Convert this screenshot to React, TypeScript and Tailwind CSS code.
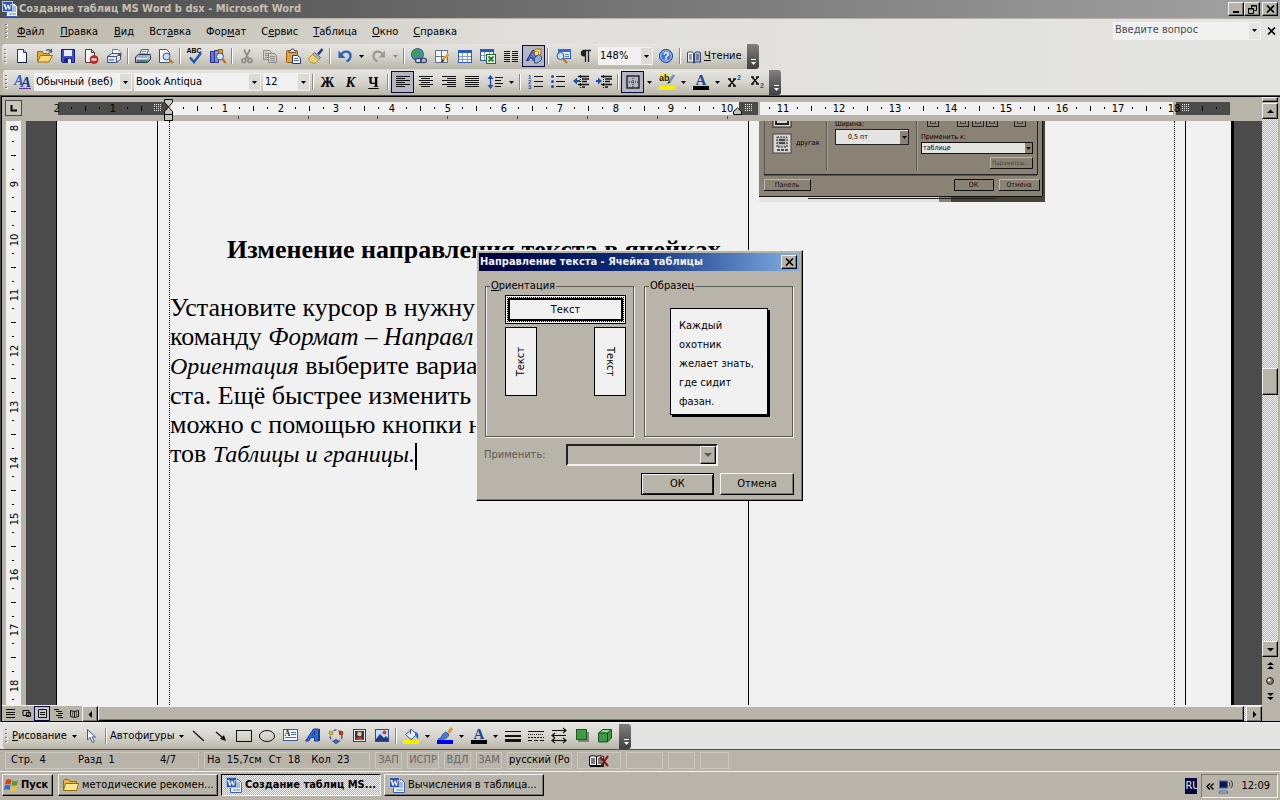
import type { ReactNode } from "react";

const Ico = ({ children }: { children: ReactNode }) => (
  <svg width="16" height="16" viewBox="0 0 16 16" fill="none" className="shrink-0 overflow-visible" aria-hidden="true">
    {children}
  </svg>
);

const serif = "Liberation Serif, serif";
const sans = "Liberation Sans, sans-serif";

/* ---------- standard toolbar icons ---------- */

const WordIcon = () => (
  <Ico>
    <path d="M4.5 2.5h8l3 3v10h-11z" fill="#f1f1f1" stroke="#3a5fb0" />
    <path d="M11 6h3M11 8h3M11 10h3M7 13h7" stroke="#5d83cf" />
    <rect x=".5" y=".5" width="10" height="10" fill="#2c55b0" stroke="#a9c0ee" />
    <text x="5.5" y="9" fontSize="9" fontWeight="bold" textAnchor="middle" fill="#fff" fontFamily={serif}>W</text>
  </Ico>
);

const NewIcon = () => (
  <Ico>
    <path d="M3.5 1.5h6l3 3v10h-9z" fill="#f7f9ff" stroke="#28386b" />
    <path d="M9.5 1.5v3h3" fill="#b8c8ea" stroke="#28386b" />
    <path d="M12.5 5v10M4 14.5h9" stroke="#0f1c48" />
  </Ico>
);

const OpenIcon = () => (
  <Ico>
    <path d="M.5 13.5v-10h5l1 2h6v3" fill="#e0ab35" stroke="#a36b10" />
    <path d="M.5 14l3-6.5h12l-3.5 6.5z" fill="#ffd873" stroke="#a36b10" />
    <path d="M9 2.5c2-1.5 4-1 5 1M14.5 1v3h-3" stroke="#35507f" strokeWidth="1.2" />
  </Ico>
);

const SaveIcon = () => (
  <Ico>
    <path d="M1.5 1.5h13v13h-12l-1-1z" fill="#3c50c8" stroke="#141f7a" />
    <rect x="4" y="2" width="8" height="6" fill="#e9edfb" />
    <rect x="4" y="10" width="8" height="5" fill="#1a2688" />
    <rect x="8" y="11" width="3" height="4" fill="#dfe3f4" />
  </Ico>
);

const PermissionIcon = () => (
  <Ico>
    <path d="M2.5 1.5h6l3 3v10h-9z" fill="#f7f7fb" stroke="#4c3b3b" />
    <path d="M8.5 1.5v3h3" stroke="#4c3b3b" />
    <circle cx="11" cy="11.500" r="4" fill="#d8281c" stroke="#8e120b" strokeWidth=".7" />
    <rect x="8.500" y="10.500" width="5" height="2" fill="#fff" />
  </Ico>
);

const MailIcon = () => (
  <Ico>
    <path d="M6.5 6v-4.5h5.5l3 3v4" fill="#f4f6fb" stroke="#6379a8" />
    <path d="M1.5 8.5l4-3h9v6l-4 3h-9z" fill="#dfe6f2" stroke="#3f5276" />
    <path d="M1.5 8.5h9v6M10.5 8.5l4-3M3 12h5" stroke="#3f5276" />
    <rect x="12" y="6" width="2" height="2" fill="#c92c20" />
  </Ico>
);

const PrintIcon = () => (
  <Ico>
    <path d="M4.5 7l2-5.5h7l-2 5.5" fill="#eef3fc" stroke="#44597d" />
    <path d="M7 3.5h4M6.5 5.5h4" stroke="#7c93c0" />
    <path d="M.5 9l3-2.5h12v5l-3 3h-12z" fill="#9fb0c4" stroke="#26374c" />
    <path d="M1 10.5h11l3-3" stroke="#e9eff5" />
    <path d="M2 13h8" stroke="#26374c" />
    <rect x="10" y="12" width="3" height="2" fill="#25b22a" />
  </Ico>
);

const PreviewIcon = () => (
  <Ico>
    <path d="M1.5 1.5h7l3 3v10h-10z" fill="#f7f7fb" stroke="#41506f" />
    <circle cx="8.5" cy="8.5" r="3.5" fill="#bfe0f7" stroke="#3c587e" />
    <path d="M11 11l4 4" stroke="#c0721b" strokeWidth="2.2" />
  </Ico>
);

const SpellIcon = () => (
  <Ico>
    <text x="7" y="5" fontSize="7" fontWeight="bold" textAnchor="middle" fill="#000" fontFamily={sans}>ABC</text>
    <path d="M3 9.5l4 4.5 7-9" stroke="#1f56b8" strokeWidth="2.4" />
  </Ico>
);

const ResearchIcon = () => (
  <Ico>
    <path d="M.5 3.5h4v11h-4z" fill="#6973d0" stroke="#2a2f86" />
    <path d="M4.5 2.5h4v12h-4z" fill="#8b95e2" stroke="#2a2f86" />
    <path d="M8.5 1.5h4v8h-4z" fill="#e2a63d" stroke="#8a5a12" />
    <circle cx="10" cy="8.5" r="3.5" fill="#cfe7fa" stroke="#3c587e" />
    <path d="M12.5 11l3 4" stroke="#c0721b" strokeWidth="2.2" />
  </Ico>
);

const CutIcon = () => (
  <Ico>
    <path d="M5 1.5l4.5 9M11 1.5l-4.5 9" stroke="#8c8c88" strokeWidth="1.7" />
    <circle cx="5" cy="12.5" r="2" stroke="#8c8c88" strokeWidth="1.7" />
    <circle cx="11" cy="12.5" r="2" stroke="#8c8c88" strokeWidth="1.7" />
  </Ico>
);

const CopyIcon = () => (
  <Ico>
    <path d="M1.5 2.5h6l2 2v7h-8z" fill="#cfcdc7" stroke="#8c8c88" />
    <path d="M3 5.5h5M3 7.5h5M3 9.5h3" stroke="#8c8c88" />
    <path d="M6.5 5.5h6l2 2v7h-8z" fill="#cfcdc7" stroke="#8c8c88" />
    <path d="M8 8.5h5M8 10.5h5M8 12.5h5" stroke="#8c8c88" />
  </Ico>
);

const PasteIcon = () => (
  <Ico>
    <rect x="1.5" y="2.5" width="11" height="12" rx="1" fill="#e8a33b" stroke="#96580f" />
    <path d="M4 4.5v-2h1.5l1-1.5h2l1 1.5h1.5v2z" fill="#d9d9d9" stroke="#555" />
    <path d="M7.5 7.5h5l3 2.5v5.5h-8z" fill="#f4f7fe" stroke="#28386b" />
    <path d="M9 10.5h4M9 12.5h5" stroke="#4b6bb0" />
  </Ico>
);

const BrushIcon = () => (
  <Ico>
    <path d="M14.5 1l-4.5 5.5" stroke="#2e3a7c" strokeWidth="2.6" />
    <path d="M6.5 4.5l6 5-2 2-6-5z" fill="#b9bdc9" stroke="#555b70" />
    <path d="M4.5 6.5l6 5-3.5 4c-3-.5-5-2-6.5-4.5z" fill="#ffe98a" stroke="#a9841c" />
    <path d="M2.5 10.5l4.5 4M4.5 9l4 3.5" stroke="#c49d2a" />
  </Ico>
);

const UndoIcon = () => (
  <Ico>
    <path d="M4 6.5c3.5-4.5 9.5-3.5 9.5 1.5 0 2.5-2 4.5-4 5.5" stroke="#2a62c4" strokeWidth="2.4" />
    <path d="M1.5 2.5v7.5h7z" fill="#2a62c4" />
  </Ico>
);

const RedoIcon = () => (
  <Ico>
    <path d="M12 6.5c-3.5-4.5-9.5-3.5-9.5 1.5 0 2.5 2 4.5 4 5.5" stroke="#9c9b97" strokeWidth="2.2" />
    <path d="M14 2.5v7h-6.5z" fill="#9c9b97" />
  </Ico>
);

const LinkIcon = () => (
  <Ico>
    <circle cx="6.5" cy="6.5" r="6" fill="#3d86d6" stroke="#1b3e75" strokeWidth=".8" />
    <path d="M2 3c2-2 5-2 6 0s-1 3-2 4 1 3-1 4c-3-1-4-5-3-8zM9.5 4l3 1v4l-3-2z" fill="#3ea63b" />
    <rect x="4.5" y="10.5" width="6" height="4" rx="2" fill="#e8ecf4" stroke="#3c4d74" strokeWidth="1.3" />
    <rect x="9.5" y="10.5" width="6" height="4" rx="2" stroke="#3c4d74" strokeWidth="1.3" />
  </Ico>
);

const TableBordersIcon = () => (
  <Ico>
    <path d="M1.5 2.5h12v12h-12z" fill="#f4f7fe" stroke="#5e6f98" />
    <path d="M7.5 2.5v12M1.5 8.5h12" stroke="#5e6f98" />
    <path d="M14.5 6l-6 6.5" stroke="#e3a230" strokeWidth="2.6" />
    <path d="M8.5 11l-1.5 4 3.5-2z" fill="#54320c" />
  </Ico>
);

const TableIcon = () => (
  <Ico>
    <rect x="1.5" y="2.5" width="13" height="12" fill="#f7f9ff" stroke="#2f5bb5" />
    <rect x="1" y="2" width="14" height="3" fill="#2f5bb5" />
    <path d="M5.5 5v9M10.5 5v9M2 8.5h12M2 11.5h12" stroke="#7d9ada" />
  </Ico>
);

const ExcelIcon = () => (
  <Ico>
    <rect x=".5" y="1.5" width="13" height="11" fill="#f7f9ff" stroke="#2f5bb5" />
    <rect x="0" y="1" width="14" height="3" fill="#2f5bb5" />
    <path d="M4.5 4v8M9.5 4v8M1 7.5h12" stroke="#7d9ada" />
    <rect x="6.5" y="6.5" width="9" height="9" fill="#f4fbf4" stroke="#1e6b28" />
    <path d="M8.5 8.5l5 5M13.5 8.5l-5 5" stroke="#1e7d2b" strokeWidth="1.8" />
  </Ico>
);

const ColumnsIcon = () => (
  <Ico>
    <path d="M1 3.5h6M9 3.5h6M1 5.5h6M9 5.5h6M1 7.5h6M9 7.5h6M1 9.5h6M9 9.5h6M1 11.5h6M9 11.5h6M1 13.5h6M9 13.5h6" stroke="#111" />
  </Ico>
);

const DrawingIcon = () => (
  <Ico>
    <path d="M.5 12.5l6-10h2.5l1 10h-3l-.3-2.5h-2.700l-1.3 2.5z" fill="#5a74d6" stroke="#1d2c80" />
    <path d="M8.500 2.5l1.500-1.500h5v5l-1.500 1.500h-5z" fill="#ffdf7a" stroke="#8e6816" />
    <path d="M8.5 3.500h4v4" stroke="#8e6816" strokeWidth=".6" />
    <path d="M8.5 10l4-3.500 3 2v3.500l-4 3h-3z" fill="#8fb0d8" stroke="#37557e" />
  </Ico>
);

const DocMapIcon = () => (
  <Ico>
    <rect x="3.5" y="1.5" width="12" height="9" fill="#e9f0fd" stroke="#2f5bb5" />
    <rect x="3" y="1" width="13" height="3" fill="#2f6bd5" />
    <path d="M10 6.5h4M10 8.5h4" stroke="#5b7cc0" />
    <circle cx="5.5" cy="8" r="3.5" fill="#bfe5f5" stroke="#3c587e" />
    <path d="M8 10.5l4 4.5" stroke="#c0721b" strokeWidth="2.2" />
  </Ico>
);

const PilcrowIcon = () => (
  <Ico>
    <path d="M7.5 2v12M10.5 2v12M5 2.5h8" stroke="#222" strokeWidth="1.3" />
    <path d="M8 2h-2a3 3 0 0 0 0 6.5h2z" fill="#222" />
  </Ico>
);

const HelpIcon = () => (
  <Ico>
    <circle cx="8" cy="8" r="6.5" fill="#3b76e0" stroke="#1a3e94" />
    <circle cx="8" cy="8" r="5.3" stroke="#dfe9fc" strokeWidth=".8" />
    <text x="8" y="12" fontSize="11" fontWeight="bold" textAnchor="middle" fill="#fff" fontFamily={sans}>?</text>
  </Ico>
);

const ReadIcon = () => (
  <Ico>
    <path d="M1.5 3.5c2-1 4.5-1 6 .5v10c-1.5-1.5-4-1.5-6-.5z" fill="#f4f7fe" stroke="#34466b" />
    <path d="M14.5 3.5c-2-1-4.500-1-6 .5v10c1.5-1.5 4-1.5 6-.5z" fill="#a9b8d4" stroke="#34466b" />
    <path d="M3 6h3M3 8h3M3 10h3M10 6h3M10 8h3M10 10h3" stroke="#34466b" />
  </Ico>
);

/* ---------- formatting toolbar icons ---------- */

const StylesIcon = () => (
  <Ico>
    <text x="4" y="11" fontSize="14" fontStyle="italic" fontWeight="bold" textAnchor="middle" fill="#2f5bc4" fontFamily={serif}>A</text>
    <text x="11" y="13" fontSize="15" fontStyle="italic" fontWeight="bold" textAnchor="middle" fill="#1c3594" fontFamily={serif}>A</text>
    <path d="M4 14.5h12" stroke="#6a2fa0" />
  </Ico>
);

const LinesIcon = ({ kind }: { kind: "left" | "center" | "right" | "justify" }) => {
  const start = kind === "left" ? 1 : kind === "right" ? 6 : 3;
  return (
    <Ico>
      {[2.5, 4.5, 6.5, 8.5, 10.5, 12.5].map((y, i) => (
        <path key={y} d={i % 2 && kind !== "justify" ? `M${start} ${y}h9` : `M1 ${y}h14`} stroke="#111" />
      ))}
    </Ico>
  );
};

const SpacingIcon = () => (
  <Ico>
    <path d="M3.5 3v10" stroke="#1f4fae" strokeWidth="1.4" />
    <path d="M.5 5l3-4 3 4zM.5 11l3 4 3-4z" fill="#1f4fae" />
    <path d="M8 3.5h8M8 6.5h6M8 9.5h8M8 12.5h6" stroke="#111" />
  </Ico>
);

const NumberedIcon = () => (
  <Ico>
    <path d="M7 2.5h9M7 7.5h9M7 12.5h9" stroke="#111" />
    {["1", "2", "3"].map((n, i) => (
      <text key={n} x="1" y={5 + i * 5} fontSize="6" fontWeight="bold" fill="#1f4fae" fontFamily={sans}>{n}</text>
    ))}
  </Ico>
);

const BulletsIcon = () => (
  <Ico>
    <path d="M6 2.5h9M6 7.5h9M6 12.5h9" stroke="#111" />
    <circle cx="2.500" cy="2.500" r="1.500" fill="#1f4fae" />
    <circle cx="2.500" cy="7.500" r="1.500" fill="#1f4fae" />
    <circle cx="2.500" cy="12.500" r="1.500" fill="#1f4fae" />
  </Ico>
);

const IndentIcon = ({ out }: { out?: boolean }) => (
  <Ico>
    <path d="M5 2.5h11M9 5h7M9 7.500h5M5 10.5h11M9 13h3" stroke="#111" strokeWidth="1.3" />
    <path d={out ? "M0 7l4-3.5v7z" : "M6 7l-4-3.5v7z"} fill="#1f4fae" />
    <path d={out ? "M3 7h4" : "M0 7h3"} stroke="#1f4fae" strokeWidth="2" />
    <path d="M7.5 1v14" stroke="#111" strokeDasharray="1 1" />
  </Ico>
);

const BorderIcon = () => (
  <Ico>
    <rect x="2" y="2" width="12" height="12" stroke="#111" strokeWidth="1.3" />
    <path d="M8 4v9M4 8h9" stroke="#111" strokeDasharray="1 1" />
  </Ico>
);

const HighlightIcon = () => (
  <Ico>
    <rect x="0" y="0" width="10" height="8" fill="#f6ee3c" />
    <text x="0" y="7" fontSize="9" fontWeight="bold" fill="#111" fontFamily={sans}>ab</text>
    <path d="M15 1l-5 7" stroke="#7d8bb8" strokeWidth="2.8" />
    <path d="M8 10l2-3 1.5 1.5z" fill="#222" />
    <rect x="0" y="12" width="16" height="4" fill="#f4f000" />
  </Ico>
);

const FontColorIcon = () => (
  <Ico>
    <text x="8" y="11" fontSize="15" fontWeight="bold" textAnchor="middle" fill="#20448f" fontFamily={serif}>A</text>
    <rect x="0" y="12" width="16" height="4" fill="#000" />
  </Ico>
);

const ScriptIcon = ({ up }: { up?: boolean }) => (
  <Ico>
    <path d={up ? "M2 5l6 7M8 5l-6 7M1 5h3M6 5h3M1 12h3M6 12h3" : "M2 3l6 7M8 3l-6 7M1 3h3M6 3h3M1 10h3M6 10h3"} stroke="#111" strokeWidth="1.5" />
    <text x="10" y={up ? 6 : 14} fontSize="7" fontWeight="bold" fill="#1f4fae" fontFamily={sans}>2</text>
  </Ico>
);

/* ---------- drawing toolbar icons ---------- */

const CursorIcon = () => (
  <Ico>
    <path d="M3.5 1.5v10.5l2.5-2.5 2.5 5 2-1-2.5-4.500h3.5z" fill="#f5f8ff" stroke="#3b5790" />
  </Ico>
);

const TextBoxIcon = () => (
  <Ico>
    <rect x="1.5" y="1.5" width="14" height="11" fill="#f7f9ff" stroke="#3c5a9c" />
    <text x="2.5" y="8" fontSize="8" fontWeight="bold" fill="#222" fontFamily={serif}>A</text>
    <path d="M9 4.5h5M9 6.5h5M3 9.5h11" stroke="#4b6bb0" />
  </Ico>
);

const WordArtIcon = () => (
  <Ico>
    <path d="M.5 13l8-12h5v12h-4v-3.5h-3.5l-2.3 3.5zM7.5 7h2v-3.5z" fill="#2f68d8" fillRule="evenodd" stroke="#173b90" />
    <path d="M14.5 1v12" stroke="#173b90" />
  </Ico>
);

const DiagramIcon = () => (
  <Ico>
    <circle cx="8" cy="8" r="6" stroke="#37557e" strokeWidth="1.3" strokeDasharray="3 2" />
    <circle cx="3" cy="5" r="2" fill="#e2c23a" stroke="#6d5a10" strokeWidth=".6" />
    <circle cx="13" cy="5" r="2" fill="#c9391e" stroke="#6d1a10" strokeWidth=".6" />
    <circle cx="8" cy="13.500" r="2" fill="#3a6cd8" stroke="#15306d" strokeWidth=".6" />
  </Ico>
);

const ClipArtIcon = () => (
  <Ico>
    <rect x="2.5" y="1.5" width="12" height="12" fill="#e9eefa" stroke="#2d3f70" />
    <rect x="4" y="3" width="9" height="9" fill="#383838" />
    <circle cx="8.5" cy="6" r="2.3" fill="#f0c9a0" />
    <path d="M5 12c0-4 7-4 7 0z" fill="#c9391e" />
  </Ico>
);

const PictureIcon = () => (
  <Ico>
    <rect x="1.5" y="1.5" width="13" height="12" fill="#c7dcfb" stroke="#2d4b98" />
    <path d="M2 11l4-5 4 4 2-2 2.500 3v2h-12.500z" fill="#213a86" />
    <circle cx="10.5" cy="4.500" r="2" fill="#d8401c" />
  </Ico>
);

const BucketIcon = () => (
  <Ico>
    <path d="M2.5 6.5l6-5 5.5 5-6 5z" fill="#e6edf8" stroke="#37557e" />
    <path d="M7.5 1v5" stroke="#37557e" />
    <path d="M12 4c3 0 4 3 3 7-1.5-1-2-3-3-4z" fill="#2f68d8" />
    <rect x="0" y="12" width="16" height="4" fill="#f4f000" />
  </Ico>
);

const PenColorIcon = () => (
  <Ico>
    <path d="M15 0l-4 5" stroke="#d89a35" strokeWidth="3" />
    <path d="M1 11c4 0 3-5 8-7l3 3c-2 4-6 5-11 4z" fill="#4d7cd8" stroke="#1f3f90" strokeWidth=".8" />
    <rect x="0" y="12" width="16" height="4" fill="#0000f0" />
  </Ico>
);

const ShadowIcon = () => (
  <Ico>
    <rect x="4" y="4" width="11" height="10" fill="#84827b" />
    <rect x="2.5" y="1.5" width="10" height="10" fill="#3f9a45" stroke="#1c5c24" />
  </Ico>
);

const CubeIcon = () => (
  <Ico>
    <path d="M1.5 5l4-3.500h9v8.5l-4 4h-9z" fill="#3f9a45" stroke="#1c4c20" />
    <path d="M3 4.500l3-2.500h7.5l-3 2.500z" fill="#9cd69c" />
    <path d="M1.5 5h9v9M10.5 5l4-3.500" stroke="#1c4c20" />
  </Ico>
);

/* ---------- small chrome pieces ---------- */

const Down = ({ color = "#000" }: { color?: string }) => (
  <svg width="5" height="3" className="shrink-0" aria-hidden="true">
    <path d="M0 0h5L2.5 3z" fill={color} />
  </svg>
);

const Grip = () => (
  <svg width="6" height="14" className="ml-[2px] shrink-0" aria-hidden="true">
    {[1, 5, 9, 13].map((y) => (
      <g key={y}>
        <rect x="1" y={y - 1} width="2" height="2" fill="#fff" />
        <rect x="0" y={y - 1} width="2" height="1" fill="#6b6a66" />
      </g>
    ))}
  </svg>
);

const Sep = () => (
  <span className="flex h-[16px] w-[6px] shrink-0 justify-center">
    <span className="w-[2px] border-r border-white bg-[#8a887f]" />
  </span>
);

const Tool = ({ label, on, children }: { label: string; on?: boolean; children: ReactNode }) => (
  <button
    type="button"
    aria-label={label}
    className={`flex h-[22px] w-[23px] shrink-0 items-center justify-center ${on ? "border border-[#0a0a3c] bg-[#b4b6c2]" : ""}`}
  >
    {children}
  </button>
);

const Drop = ({ label, color }: { label: string; color?: string }) => (
  <button type="button" aria-label={label} className="flex h-[22px] w-[11px] shrink-0 items-center justify-center">
    <Down color={color} />
  </button>
);

const Combo = ({ label, value, width }: { label: string; value: string; width: string }) => (
  <span className={`relative flex h-[18px] shrink-0 border border-[#f1f1f1] bg-[#f1f1f1] ${width}`}>
    <select aria-label={label} className="w-full appearance-none pl-[1px] pr-3 text-[11px] leading-[14px] outline-none">
      <option>{value}</option>
    </select>
    <span className="pointer-events-none absolute inset-y-0 right-0 flex w-[11px] items-center justify-center bg-[#dddbd6]">
      <Down />
    </span>
  </span>
);

const Cap = () => (
  <span className="flex w-[12px] shrink-0 flex-col items-center justify-end self-stretch rounded-r-[3px] bg-linear-to-b from-[#808080] to-[#404040] pb-[3px] pl-[2px]">
    <svg width="7" height="7" aria-hidden="true">
      <path d="M1 .5h5" stroke="#fff" />
      <path d="M1 3h5l-2.5 3z" fill="#fff" />
    </svg>
  </span>
);

const Bar = ({ children, inset = "pl-[3px]" }: { children: ReactNode; inset?: string }) => (
  <div className={`flex h-[25px] ${inset}`}>
    <div role="toolbar" className="flex items-center rounded-l-[3px] bg-linear-to-b from-[#e6e5e1] via-[#d6d4cd] to-[#b9b5a8] pb-[1px]">
      {children}
    </div>
    <Cap />
  </div>
);

const raised =
  "border border-t-[#f1f1f1] border-l-[#f1f1f1] border-r-black border-b-black bg-[#b8b4a9] shadow-[inset_-1px_-1px_0_#7b7870]";
const sunken = "border border-t-[#7b7870] border-l-[#7b7870] border-r-[#f1f1f1] border-b-[#f1f1f1]";
const checker = "bg-[repeating-conic-gradient(#f1f1f1_0_25%,#b8b4a9_0_50%)] bg-[size:2px_2px]";

const WinButton = ({ label, children, wide }: { label: string; children: ReactNode; wide?: boolean }) => (
  <button type="button" aria-label={label} className={`flex h-[14px] w-[16px] items-center justify-center ${raised} ${wide ? "ml-[2px]" : ""}`}>
    {children}
  </button>
);

const Cross = () => (
  <svg width="9" height="8" aria-hidden="true">
    <path d="M1 .5l7 7M8 .5l-7 7" stroke="#000" strokeWidth="1.6" />
  </svg>
);

const ScrollButton = ({ label, d }: { label: string; d: string }) => (
  <button type="button" aria-label={label} className={`flex h-[16px] w-[16px] shrink-0 items-center justify-center ${raised}`}>
    <svg width="7" height="7" aria-hidden="true">
      <path d={d} fill="#000" />
    </svg>
  </button>
);

/* ---------- title, menu, toolbars ---------- */

const TitleBar = () => (
  <header className="flex h-[19px] items-center border-b border-[#b8b4a9] bg-linear-to-r from-[#4b4b4b] to-[#a3a3a3] pl-[2px] pr-[2px]">
    <WordIcon />
    <h1 className="ml-[1px] flex-1 text-[11px] font-bold text-[#c4c0b5]">Создание таблиц MS Word b dsx - Microsoft Word</h1>
    <WinButton label="Свернуть">
      <svg width="8" height="8"><rect x="1" y="6" width="6" height="2" fill="#000" /></svg>
    </WinButton>
    <WinButton label="Восстановить">
      <svg width="9" height="9" fill="none" stroke="#000">
        <path d="M3 .5h5.5v5h-2M3.5 0v3M3 1h6M.5 3.5h5v5h-5zM0 4h6" />
      </svg>
    </WinButton>
    <WinButton label="Закрыть" wide>
      <Cross />
    </WinButton>
  </header>
);

// [before, hot letter, after]
const menus = [
  ["", "Ф", "айл"],
  ["", "П", "равка"],
  ["", "В", "ид"],
  ["Вст", "а", "вка"],
  ["Фор", "м", "ат"],
  ["С", "е", "рвис"],
  ["", "Т", "аблица"],
  ["", "О", "кно"],
  ["", "С", "правка"],
];

const MenuBar = () => (
  <nav className="flex h-[25px] items-center pl-[3px] pr-[4px] pb-[2px]">
    <Grip />
    <ul className="-ml-[2px] flex flex-1 pb-[2px]">
      {menus.map(([a, b, c], i) => (
        <li key={a + b + c}>
          <button type="button" className={`text-[11px] ${i < 2 ? "px-2" : "pl-2 pr-[7px]"}`}>
            {a}
            <u>{b}</u>
            {c}
          </button>
        </li>
      ))}
    </ul>
    <span className="flex h-[18px] w-[148px] border border-[#f1f1f1] bg-[#f1f1f1]">
      <input aria-label="Введите вопрос" placeholder="Введите вопрос" className="min-w-0 flex-1 pl-[1px] text-[11px] outline-none placeholder:text-[#4b4b4b]" />
      <span className="flex w-[11px] items-center justify-center bg-[#e4e4e2]">
        <Down />
      </span>
    </span>
    <button type="button" aria-label="Закрыть документ" className="ml-[6px] flex">
      <Cross />
    </button>
  </nav>
);

const StandardBar = () => (
  <Bar inset="pl-[2px]">
    <Grip />
    <Tool label="Создать"><NewIcon /></Tool>
    <Tool label="Открыть"><OpenIcon /></Tool>
    <Tool label="Сохранить"><SaveIcon /></Tool>
    <Tool label="Разрешения"><PermissionIcon /></Tool>
    <Tool label="Сообщение"><MailIcon /></Tool>
    <Sep />
    <Tool label="Печать"><PrintIcon /></Tool>
    <Tool label="Предварительный просмотр"><PreviewIcon /></Tool>
    <Sep />
    <Tool label="Правописание"><SpellIcon /></Tool>
    <Tool label="Справочные материалы"><ResearchIcon /></Tool>
    <Sep />
    <Tool label="Вырезать"><CutIcon /></Tool>
    <Tool label="Копировать"><CopyIcon /></Tool>
    <Tool label="Вставить"><PasteIcon /></Tool>
    <Tool label="Формат по образцу"><BrushIcon /></Tool>
    <Sep />
    <Tool label="Отменить"><UndoIcon /></Tool>
    <Drop label="Список отмены" />
    <Tool label="Вернуть"><RedoIcon /></Tool>
    <Drop label="Список возврата" color="#8c8c88" />
    <Sep />
    <Tool label="Гиперссылка"><LinkIcon /></Tool>
    <Tool label="Таблицы и границы"><TableBordersIcon /></Tool>
    <Tool label="Добавить таблицу"><TableIcon /></Tool>
    <Tool label="Лист Excel"><ExcelIcon /></Tool>
    <Tool label="Колонки"><ColumnsIcon /></Tool>
    <Tool label="Панель рисования" on><DrawingIcon /></Tool>
    <Sep />
    <Tool label="Схема документа"><DocMapIcon /></Tool>
    <Tool label="Непечатаемые знаки"><PilcrowIcon /></Tool>
    <span className="flex px-[1px]">
      <Combo label="Масштаб" value="148%" width="w-[55px]" />
    </span>
    <Tool label="Справка Word"><HelpIcon /></Tool>
    <Sep />
    <button type="button" className="flex items-center gap-[2px] pl-[3px] pr-[5px] pt-[1px] text-[11px]">
      <ReadIcon />
      <span><u>Ч</u>тение</span>
    </button>
  </Bar>
);

const FormatBar = () => (
  <Bar>
    <Grip />
    <Tool label="Стили"><StylesIcon /></Tool>
    <span className="flex gap-[2px]">
      <Combo label="Стиль" value="Обычный (веб)" width="w-[98px]" />
      <Combo label="Шрифт" value="Book Antiqua" width="w-[127px]" />
      <Combo label="Размер шрифта" value="12" width="w-[47px]" />
    </span>
    <Sep />
    <Tool label="Полужирный"><b className="text-[14px] [font-family:'Liberation_Serif',serif]">Ж</b></Tool>
    <Tool label="Курсив"><b className="text-[14px] italic [font-family:'Liberation_Serif',serif]">К</b></Tool>
    <Tool label="Подчеркнутый"><b className="text-[14px] underline [font-family:'Liberation_Serif',serif]">Ч</b></Tool>
    <Sep />
    <Tool label="По левому краю" on><LinesIcon kind="left" /></Tool>
    <Tool label="По центру"><LinesIcon kind="center" /></Tool>
    <Tool label="По правому краю"><LinesIcon kind="right" /></Tool>
    <Tool label="По ширине"><LinesIcon kind="justify" /></Tool>
    <Tool label="Междустрочный интервал"><SpacingIcon /></Tool>
    <Drop label="Выбор интервала" />
    <Sep />
    <Tool label="Нумерация"><NumberedIcon /></Tool>
    <Tool label="Маркеры"><BulletsIcon /></Tool>
    <Tool label="Уменьшить отступ"><IndentIcon out /></Tool>
    <Tool label="Увеличить отступ"><IndentIcon /></Tool>
    <Sep />
    <Tool label="Границы" on><BorderIcon /></Tool>
    <Drop label="Вид границ" />
    <Tool label="Выделение цветом"><HighlightIcon /></Tool>
    <Drop label="Цвет выделения" />
    <Tool label="Цвет шрифта"><FontColorIcon /></Tool>
    <Drop label="Выбор цвета шрифта" />
    <Tool label="Надстрочный"><ScriptIcon up /></Tool>
    <Tool label="Подстрочный"><ScriptIcon /></Tool>
  </Bar>
);

const DrawingBar = () => (
  <div className="border-t border-b border-t-[#f1f1f1] border-b-[#4b4b4b] bg-[#e4e4e2] pt-[1px]">
    <Bar>
      <Grip />
      <button type="button" className="flex w-[69px] items-center gap-[5px] pl-[1px] pt-[1px] text-[11px]">
        <span><u>Р</u>исование</span>
        <Down />
      </button>
      <Tool label="Выбор объектов"><CursorIcon /></Tool>
      <Sep />
      <button type="button" className="flex w-[77px] items-center gap-[5px] pl-[1px] pt-[1px] text-[11px]">
        <span>Автофи<u>г</u>уры</span>
        <Down />
      </button>
      <Tool label="Линия"><Ico><path d="M3 3l11 10" stroke="#111" strokeWidth="1.3" /></Ico></Tool>
      <Tool label="Стрелка">
        <Ico>
          <path d="M3 4l7 6" stroke="#111" strokeWidth="1.3" />
          <path d="M13 13l-2-6-4 4z" fill="#111" />
        </Ico>
      </Tool>
      <Tool label="Прямоугольник"><Ico><rect x=".5" y="2.5" width="15" height="11" stroke="#111" /></Ico></Tool>
      <Tool label="Овал"><Ico><ellipse cx="8" cy="8" rx="7.5" ry="5.5" stroke="#111" /></Ico></Tool>
      <Tool label="Надпись"><TextBoxIcon /></Tool>
      <Tool label="Объект WordArt"><WordArtIcon /></Tool>
      <Tool label="Диаграмма"><DiagramIcon /></Tool>
      <Tool label="Картинка"><ClipArtIcon /></Tool>
      <Tool label="Рисунок"><PictureIcon /></Tool>
      <Sep />
      <Tool label="Цвет заливки"><BucketIcon /></Tool>
      <Drop label="Выбор заливки" />
      <Tool label="Цвет линий"><PenColorIcon /></Tool>
      <Drop label="Выбор цвета линий" />
      <Tool label="Цвет текста"><FontColorIcon /></Tool>
      <Drop label="Выбор цвета текста" />
      <Tool label="Тип линии">
        <Ico><path d="M0 3.5h16" stroke="#111" /><path d="M0 8h16" stroke="#111" strokeWidth="2" /><path d="M0 12.5h16" stroke="#111" strokeWidth="3" /></Ico>
      </Tool>
      <Tool label="Тип штриха">
        <Ico>
          <path d="M0 3.5h16" stroke="#111" />
          <path d="M0 6.5h16" stroke="#111" strokeDasharray="1 1" />
          <path d="M0 9.5h16" stroke="#111" strokeDasharray="2 1" />
          <path d="M0 12.5h16" stroke="#111" strokeDasharray="4 2" />
        </Ico>
      </Tool>
      <Tool label="Вид стрелки">
        <Ico>
          <path d="M1 2.5h14M1 7.5h14M1 12.5h14M12 0l3 2.5-3 2.5M4 5l-3 2.5 3 2.5M4 10l-3 2.5 3 2.5M12 10l3 2.5-3 2.5" stroke="#111" strokeWidth="1.2" />
        </Ico>
      </Tool>
      <Tool label="Тень"><ShadowIcon /></Tool>
      <Tool label="Объем"><CubeIcon /></Tool>
      <span className="w-[3px]" />
    </Bar>
  </div>
);

/* ---------- rulers ---------- */

const CM = 55.83;
const ORIGIN = 169;

const Dots = ({ x }: { x: number }) => (
  <g fill="#f1f1f1">
    {[0, 2, 4, 6].map((dx) => [0, 2, 4, 6].map((dy) => <rect key={`${dx}-${dy}`} x={x + dx} y={104 + dy} width="1" height="1" />))}
  </g>
);

const HRuler = () => {
  const marks = Array.from({ length: 22 }, (_, i) => i - 2);
  return (
    <svg className="h-[24px] min-w-0 flex-1 text-[11px]" aria-hidden="true">
      <g transform="translate(-26 -97)">
        <rect x="58" y="102" width="110" height="13" fill="#4b4b4b" />
        <rect x="168" y="102" width="571" height="13" fill="#f1f1f1" />
        <rect x="739" y="102" width="19" height="13" fill="#4b4b4b" />
        <rect x="760" y="102" width="413" height="13" fill="#f1f1f1" />
        <rect x="1176" y="102" width="54" height="13" fill="#4b4b4b" />
        {marks.map((n) => {
          const x = Math.round(ORIGIN + n * CM);
          return (
            <g key={n} fill="#000">
              {n !== 0 && n < 19 && (
                <text x={x} y="112" textAnchor="middle">{Math.abs(n)}</text>
              )}
              {x < 1200 && n !== 10 && <rect x={x + 14} y="107" width="1" height="2" />}
              {x < 1200 && n !== 10 && <rect x={x + 28} y="106" width="1" height="5" />}
              {x < 1180 && <rect x={x + 42} y="107" width="1" height="2" />}
            </g>
          );
        })}
        {[238, 308, 377, 447, 517, 587, 657, 727].map((x) => (
          <rect key={x} x={x} y="116" width="1" height="3" fill="#4b4b4b" />
        ))}
        <Dots x={154} />
        <Dots x={745} />
        <Dots x={1182} />
        <path d="M164.5 99.5h8v3l-4 4.5-4-4.5zM164.5 114.5v-3l4-4.5 4 4.5v3zM164.5 114.5h8v6h-8z" fill="#c9c6bd" stroke="#000" />
        <path d="M733.5 114.5v-3l4-3.5 4 3.5v3z" fill="#c9c6bd" stroke="#000" />
      </g>
    </svg>
  );
};

const VRuler = () => (
  <svg className="h-full w-[15px] shrink-0 bg-[#f1f1f1] text-[11px]" aria-hidden="true">
    {Array.from({ length: 11 }, (_, i) => {
      const y = Math.round(7 + i * CM);
      return (
        <g key={i}>
          <text x="0" y="0" transform={`translate(12 ${y}) rotate(-90)`} textAnchor="middle">{i + 8}</text>
          <rect x="6" y={y + 13} width="2" height="1" />
          <rect x="5" y={y + 27} width="5" height="1" />
          <rect x="6" y={y + 41} width="2" height="1" />
        </g>
      );
    })}
  </svg>
);

/* ---------- document ---------- */

// illustration pasted into the right-hand cell, cut off by the top of the view
const Illustration = () => (
  <svg width="286" height="81" className="block text-[7px]" role="img" aria-label="Границы и заливка">
    <rect width="286" height="81" fill="#8a8275" />
    <path d="M0 76h180v5H0z" fill="#e4e4e2" />
    <path d="M192 76h94v5h-94z" fill="#4a4436" />
    <path d="M49 77.5h187" stroke="#222" />
    <path d="M284.5 0v81" stroke="#4a4436" strokeWidth="3" />
    <path d="M0 75.5h283M283.5 0v75" stroke="#111" />
    <path d="M5 53.5h273M278.5 0v54" stroke="#222" />
    <path d="M5.5 0v53M5 54.5h273M67.5 0v50M157.5 0v50" stroke="#5c574c" />
    <path d="M68.5 0v50M158.5 0v50" stroke="#a9a296" />

    <rect x="14" y="-10" width="18" height="16" fill="#dad8d2" stroke="#222" />
    <rect x="17" y="-8" width="12" height="11" stroke="#222" strokeWidth="2" fill="none" />
    <rect x="14" y="13" width="18" height="19" fill="#dad8d2" stroke="#444" />
    <rect x="18" y="16" width="10" height="10" fill="#bbb" stroke="#222" strokeDasharray="2 1" />
    <path d="M18 29h3M22 29h3M26 29h3M20 19h6M20 22h6" stroke="#222" strokeWidth="1.5" />
    <text x="37" y="24">другая</text>

    <text x="76" y="5">Ширина:</text>
    <rect x="76.5" y="8.5" width="73" height="15" fill="#e4e4e2" stroke="#222" />
    <rect x="141" y="10" width="8" height="13" fill="#8a8275" />
    <path d="M143 15h5l-2.5 3z" fill="#111" />
    <text x="89" y="18">0,5 пт</text>

    {[168, 198, 213, 227, 255].map((x) => (
      <g key={x}>
        <rect x={x + 0.5} y="-5.5" width="11" height="11" fill="#8a8275" stroke="#222" />
        <rect x={x + 3.5} y="-3.5" width="5" height="6" fill="none" stroke="#4a4436" />
      </g>
    ))}

    <text x="162" y="18">Применить к:</text>
    <rect x="162.5" y="21.5" width="111" height="11" fill="#e4e4e2" stroke="#111" />
    <rect x="266" y="22" width="7" height="10" fill="#8a8275" />
    <path d="M267 26h5l-2.5 3z" fill="#111" />
    <text x="164" y="29">таблице</text>

    {[
      { x: 231, y: 36, w: 42, t: "Параметры...", c: "#4a4436" },
      { x: 5, y: 58, w: 46, t: "Панель", c: "#111" },
      { x: 195, y: 58, w: 39, t: "ОК", c: "#111" },
      { x: 240, y: 58, w: 40, t: "Отмена", c: "#111" },
    ].map((b) => (
      <g key={b.t}>
        <path d={`M${b.x + 0.5} ${b.y + 11}v-10.500h${b.w}`} fill="none" stroke="#bdb7ab" />
        <path d={`M${b.x} ${b.y + 11.5}h${b.w + 0.5}v-11`} fill="none" stroke="#111" />
        <text x={b.x + b.w / 2} y={b.y + 8} fontSize={b.w < 42 || b.t === "Панель" ? 7 : 6} textAnchor="middle" fill={b.c}>{b.t}</text>
      </g>
    ))}
    <path d="M195.5 69.500v-11h39" fill="none" stroke="#111" />
  </svg>
);

const PageText = () => (
  <article className="w-[579px] shrink-0 overflow-hidden whitespace-nowrap border-l border-dotted border-black pt-[114px] text-[26px] leading-[29px] text-black [font-family:'Liberation_Serif',serif]">
    <h2 className="pl-[57px] text-[26px] font-bold">Изменение направления текста в ячейках</h2>
    <p className="mt-[29px]">
      Установите курсор в нужну
      <br />
      команду <i className="text-[25px]">Формат – Направл</i>
      <br />
      <i className="text-[24px]">Ориентация</i> выберите вариа
      <br />
      ста. Ещё быстрее изменить
      <br />
      можно с помощью кнопки н
      <br />
      тов <i className="text-[24px]">Таблицы и границы.</i>
      <span className="inline-block h-[27px] w-[2px] bg-black align-middle" />
    </p>
  </article>
);

const Page = () => (
  <div className="flex min-w-0 flex-1 bg-[#4b4b4b] pl-[30px] pr-[28px]">
    <div className="flex min-w-0 flex-1 border-l border-r-3 border-black bg-[#f1f1f1]">
      <div className="w-[100px] shrink-0" />
      <div className="flex min-w-0 flex-1 border-l border-r border-black">
        <div className="w-[11px] shrink-0" />
        <PageText />
        <div className="mr-[10px] min-w-0 flex-1 overflow-hidden border-l border-r border-l-black border-r-black pl-[10px] [border-right-style:dotted]">
          <Illustration />
        </div>
      </div>
      <div className="w-[45px] shrink-0" />
    </div>
  </div>
);

const ViewButton = ({ label, d, on }: { label: string; d: string; on?: boolean }) => (
  <button type="button" aria-label={label} className={`flex h-[15px] w-[16px] shrink-0 items-center justify-center ${on ? "border border-[#0a0a3c] bg-[#c3c3cb]" : ""}`}>
    <svg width="9" height="9" fill="none" stroke="#111" className="shrink-0">
      <path d={d} />
    </svg>
  </button>
);

const Editor = () => (
  <main className="flex min-h-0 flex-1 border-t border-l border-[#4b4b4b] bg-[#b8b4a9]">
    <div className="flex min-w-0 flex-1 border-t border-b border-l border-black">
      <div className="flex min-w-0 flex-1 flex-col">
        <div className="flex h-[24px] shrink-0">
          <button type="button" aria-label="Тип табуляции" className="mx-[3px] mt-[3px] flex h-[16px] w-[17px] items-center justify-center border border-[#4b4b4b] bg-[#c9c6bd]">
            <svg width="7" height="7"><path d="M1.5 0v5.5H7" fill="none" stroke="#000" strokeWidth="2" /></svg>
          </button>
          <div className="w-[1px]" />
          <HRuler />
        </div>
        <div className="flex min-h-0 flex-1 overflow-hidden pl-[4px]">
          <VRuler />
          <div className="w-[5px] shrink-0" />
          <Page />
        </div>
        <div className="flex h-[16px] shrink-0 border-t border-[#f1f1f1]">
          <ViewButton label="Обычный" d="M0 .5h9M0 3.5h9M0 5.5h9M0 8.5h9" />
          <ViewButton label="Веб-документ" d="M1 1.5h6v5h-6zM4.5 3.5h4v4h-4z" />
          <ViewButton label="Разметка страницы" d="M.5 .5h8v8h-8zM2 3.5h5M2 5.5h5" on />
          <ViewButton label="Структура" d="M0 .5h5M2 2.5h6M4 4.5h5M2 6.5h6M4 8.5h5" />
          <ViewButton label="Чтение" d="M.5 1.5l4 1 4-1v6l-4 1-4-1zM4.5 2v6M2 4h1M6 4h1M2 6h1M6 6h1" />
          <ScrollButton label="Влево" d="M5 0v7L1.5 3.5z" />
          <div className={`flex min-w-0 flex-1 pr-[2px] ${checker}`}>
            <div className={`flex-1 ${raised}`} />
          </div>
          <ScrollButton label="Вправо" d="M2 0v7l3.5-3.5z" />
        </div>
      </div>
      <div className="mr-[2px] flex w-[16px] shrink-0 flex-col">
        <div className={`mb-[1px] h-[5px] ${raised}`} />
        <ScrollButton label="Вверх" d="M0 5h7L3.5 1.5z" />
        <div className={`flex flex-1 flex-col ${checker}`}>
          <div className="grow-[249] basis-0" />
          <div className={`h-[27px] ${raised}`} />
          <div className="grow-[247] basis-0" />
        </div>
        <ScrollButton label="Вниз" d="M0 2h7L3.5 5.5z" />
        <div className="flex h-[64px] flex-col items-center gap-[8px] pt-[5px]">
          <button type="button" aria-label="Предыдущая страница">
            <svg width="7" height="7" className="block"><path d="M0 3h7L3.5 0zM0 7h7L3.5 4z" fill="#000" /></svg>
          </button>
          <button type="button" aria-label="Выбор объекта перехода">
            <svg width="8" height="8" className="block"><circle cx="4" cy="4" r="3.4" fill="#84827b" stroke="#222" /><circle cx="3" cy="3" r="1.3" fill="#f1f1f1" /></svg>
          </button>
          <button type="button" aria-label="Следующая страница">
            <svg width="7" height="7" className="block"><path d="M0 0h7L3.5 3zM0 4h7L3.5 7z" fill="#000" /></svg>
          </button>
        </div>
      </div>
    </div>
  </main>
);

/* ---------- dialog ---------- */

const group = "h-[158px] flex-1 border border-[#5c5a54] px-[4px] shadow-[1px_1px_0_#f1f1f1,inset_1px_0_0_#f1f1f1]";

const Dialog = () => (
  <section
    role="dialog"
    aria-label="Направление текста - Ячейка таблицы"
    className={`absolute left-[476px] top-[250px] flex w-[327px] flex-col p-[2px] ${raised}`}
  >
    <div className="flex h-[18px] items-center bg-linear-to-r from-[#00003b] via-[#12307c] to-[#86b0e6] pl-[1px] pr-[3px]">
      <h2 className="flex-1 text-[11px] font-bold text-[#f1f1f1]">Направление текста - Ячейка таблицы</h2>
      <WinButton label="Закрыть"><Cross /></WinButton>
    </div>
    <div className="flex gap-[10px] pl-[6px] pr-[7px] pt-[8px]">
      <fieldset className={group}>
        <legend className="px-[1px] text-[11px] leading-[14px]"><u>О</u>риентация</legend>
        <div className="ml-[15px] mt-[2px] w-[121px]">
          <button type="button" className="block h-[29px] w-full border border-black bg-[#f1f1f1] p-[1px] text-[11px]">
            <span className="flex h-full border border-dotted border-black">
              <span className="flex flex-1 items-center justify-center border-2 border-black pt-[1px]">Текст</span>
            </span>
          </button>
          <div className="mt-[3px] flex justify-between">
            <button type="button" className="flex h-[69px] w-[32px] items-center justify-center border border-black bg-[#f1f1f1] text-[11px]">
              <span className="rotate-180 [writing-mode:vertical-rl]">Текст</span>
            </button>
            <button type="button" className="flex h-[69px] w-[32px] items-center justify-center border border-black bg-[#f1f1f1] text-[11px]">
              <span className="[writing-mode:vertical-rl]">Текст</span>
            </button>
          </div>
        </div>
      </fieldset>
      <fieldset className={group}>
        <legend className="px-[1px] text-[11px] leading-[14px]">Образец</legend>
        <p className="ml-[21px] mt-[15px] h-[107px] w-[98px] whitespace-nowrap border border-black bg-[#f1f1f1] pl-[8px] pt-[7px] text-[11px] leading-[19px] shadow-[2px_2px_0_#000]">
          Каждый
          <br />
          охотник
          <br />
          желает знать,
          <br />
          где сидит
          <br />
          фазан.
        </p>
      </fieldset>
    </div>
    <div className="mt-[7px] flex items-center pl-[5px] text-[11px] text-[#5c5a54]">
      <label htmlFor="apply" className="w-[82px]">Применить:</label>
      <span className="relative flex h-[22px] w-[152px] border-2 border-t-[#222] border-l-[#222] border-r-[#f1f1f1] border-b-[#f1f1f1]">
        <select id="apply" disabled className="w-full appearance-none" />
        <span className={`pointer-events-none absolute inset-y-0 right-0 flex w-[16px] items-center justify-center ${raised}`}>
          <svg width="8" height="4"><path d="M0 0h8L4 4z" fill="#5c5a54" /></svg>
        </span>
      </span>
    </div>
    <div className="mt-[7px] mb-[3px] flex justify-end gap-[6px] pr-[6px] text-[11px]">
      <button type="button" className="h-[22px] w-[73px] border border-black shadow-[inset_1px_1px_0_#f1f1f1,inset_-1px_-1px_0_#222]">ОК</button>
      <button type="button" className={`h-[22px] w-[74px] ${raised}`}>Отмена</button>
    </div>
  </section>
);

/* ---------- status bar, taskbar ---------- */

const statusBox = "flex h-[17px] items-center border border-[#cbc8bf] whitespace-nowrap overflow-hidden";

const StatusBar = () => (
  <footer className="flex h-[22px] items-center gap-[5px] border-b border-[#f1f1f1] bg-[#b8b4a9] pl-[5px] text-[11px]">
    <div className={`${statusBox} w-[194px] pl-[5px]`}>
      <span className="w-[67px]">Стр.&nbsp; 4</span>
      <span className="w-[82px]">Разд&nbsp; 1</span>
      <span>4/7</span>
    </div>
    <div className={`${statusBox} w-[166px] gap-[7px] pl-[2px]`}>
      <span>На&nbsp; 15,7см</span>
      <span>Ст&nbsp; 18</span>
      <span className="ml-[4px]">Кол&nbsp; 23</span>
    </div>
    <div className={`${statusBox} w-[27px] justify-center text-[#6b6a66]`}>ЗАП</div>
    <div className={`${statusBox} w-[32px] justify-center text-[#6b6a66]`}>ИСПР</div>
    <div className={`${statusBox} w-[27px] justify-center text-[#6b6a66]`}>ВДЛ</div>
    <div className={`${statusBox} w-[26px] justify-center text-[#6b6a66]`}>ЗАМ</div>
    <div className={`${statusBox} w-[65px] pl-[1px]`}>русский (Ро</div>
    <div className={`${statusBox} w-[44px] justify-center`}>
      <svg width="22" height="14" aria-hidden="true">
        <path d="M1.5 2.5c3-1 5-1 7 0 2-1 4-1 7 0v9h-14z" fill="#f1f1f1" stroke="#000" />
        <path d="M8.5 2v9M3 5h4M3 7h4M3 9h4M10 5h4M10 7h4M10 9h4M2 12.5h14" stroke="#000" />
        <path d="M12 3l8 9M20 2l-7 10" stroke="#7a1212" strokeWidth="2" />
      </svg>
    </div>
    <div className={`${statusBox} w-[37px]`} />
    <div className={`${statusBox} w-[27px]`} />
    <div className={`${statusBox} w-[29px]`} />
  </footer>
);

const TaskButton = ({ icon, text, active }: { icon: ReactNode; text: string; active?: boolean }) => (
  <button
    type="button"
    className={`flex h-[22px] w-[160px] items-center gap-[3px] pl-[4px] text-[11px] whitespace-nowrap ${
      active ? `font-bold border border-t-black border-l-black border-r-[#f1f1f1] border-b-[#f1f1f1] ${checker}` : raised
    }`}
  >
    {icon}
    <span>{text}</span>
  </button>
);

const Taskbar = () => (
  <footer className="flex h-[28px] items-start bg-[#b8b4a9] pl-[2px] pr-[2px] pt-[2px]">
    <button type="button" className={`flex h-[22px] w-[51px] items-center gap-[1px] pl-[1px] text-[11px] font-bold ${raised}`}>
      <Ico>
        <path d="M2 3c2-1.5 3.5-1 5.5 0l-1 4.5c-2-1-3.5-1-5.5 0z" fill="#d8401c" />
        <path d="M8.5 3.5c2 1 3.5 1 5.5 0l-1 4.5c-2 1-3.5 1-5.5 0z" fill="#4f9e2f" />
        <path d="M1 8.5c2-1 3.5-1 5.5 0l-1 4.5c-2-1-3.5-1-5.5 0z" fill="#2f68d8" />
        <path d="M7.5 9c2 1 3.5 1 5.5 0l-1 4.5c-2 1-3.5 1-5.5 0z" fill="#efc22c" />
      </Ico>
      Пуск
    </button>
    <div className="ml-[5px] flex flex-1 gap-[3px]">
      <TaskButton
        text="методические рекомен..."
        icon={
          <Ico>
            <path d="M.5 13.5v-10l1-1h4l1.5 2h6.5v9z" fill="#e6b93c" stroke="#93690e" />
            <path d="M.5 13.5l2-7h13l-2 7z" fill="#ffe694" stroke="#93690e" />
          </Ico>
        }
      />
      <TaskButton text="Создание таблиц MS..." icon={<WordIcon />} active />
      <TaskButton text="Вычисления в таблица..." icon={<WordIcon />} />
    </div>
    <span className="mr-[4px] mt-[4px] h-[16px] w-[12px] overflow-hidden bg-[#00003b] text-[11px] leading-[16px] text-[#f1f1f1]">RU</span>
    <div className={`flex h-[24px] items-center pl-[4px] pr-[7px] text-[11px] ${sunken}`}>
      <button type="button" aria-label="Скрытые значки" className="mr-[4px]">
        <svg width="8" height="7" className="block" fill="none" stroke="#000" strokeWidth="1.4">
          <path d="M4 .5l-3 3 3 3M7.5 .5l-3 3 3 3" />
        </svg>
      </button>
      <svg width="17" height="15" className="mr-[6px]" aria-hidden="true">
        <rect x="1.5" y="2" width="8" height="7" fill="#0a1a50" stroke="#3c6bc8" />
        <path d="M2 12h7l1 2H1z" fill="#cfd8ea" stroke="#4b5f90" />
        <path d="M11 3c1 1.5 1 3 0 4.5M13 1.5c2 2.5 2 5 0 7.5" fill="none" stroke="#333" />
      </svg>
      <time>12:09</time>
    </div>
  </footer>
);

export default function App() {
  return (
    <div className="relative flex h-screen w-full flex-col overflow-hidden bg-[#b8b4a9] text-black [font-family:'DejaVu_Sans_Condensed','DejaVu_Sans',sans-serif]">
      <TitleBar />
      <div className="flex flex-col bg-linear-to-r from-[#b9b5a8] via-[#e0dfdb] via-40% to-[#e4e4e2]">
        <MenuBar />
        <StandardBar />
        <div className="h-[1px]" />
        <FormatBar />
      </div>
      <Editor />
      <DrawingBar />
      <StatusBar />
      <Taskbar />
      <Dialog />
    </div>
  );
}
